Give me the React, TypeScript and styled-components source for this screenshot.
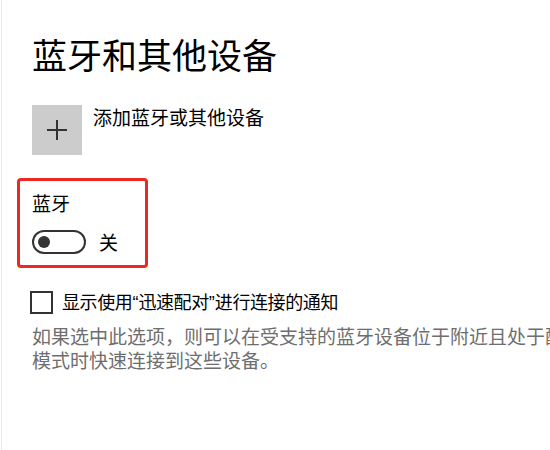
import React from "react";
import styled, { createGlobalStyle } from "styled-components";

const GlobalStyle = createGlobalStyle`
  html, body {
    margin: 0;
    padding: 0;
    background: #ffffff;
    overflow: hidden;
  }
  body {
    font-family: "Noto Sans CJK SC", "Noto Sans", sans-serif;
    color: #000000;
  }
`;

const Page = styled.div`
  box-sizing: border-box;
  width: 550px;
  height: 450px;
  margin-left: 1px;
  border-left: 1px solid #e8e8e8;
  padding: 29px 0 0 30px;
  overflow: hidden;
`;

const Title = styled.h1`
  margin: 0;
  font-size: 35px;
  font-weight: 400;
  line-height: 50px;
  color: #000000;
`;

const AddRow = styled.div`
  display: flex;
  align-items: flex-start;
  gap: 11px;
  margin-top: 26px;
`;

const PlusTile = styled.div`
  width: 50px;
  height: 50px;
  background: #cccccc;
  display: flex;
  align-items: center;
  justify-content: center;
`;

const AddLabel = styled.span`
  font-size: 19px;
  line-height: 24px;
`;

const Highlight = styled.div`
  box-sizing: border-box;
  width: 131px;
  margin: 23px 0 0 -15px;
  padding: 9px 0 11px 12px;
  border: 3px solid #ea2a22;
  border-radius: 4px;
`;

const SectionLabel = styled.div`
  font-size: 19px;
  line-height: 26px;
`;

const ToggleRow = styled.div`
  display: flex;
  align-items: center;
  gap: 13px;
  margin-top: 14px;
`;

const ToggleTrack = styled.div<{ on?: boolean }>`
  box-sizing: border-box;
  width: 54px;
  height: 24px;
  border: 2px solid #333333;
  border-radius: 12px;
  display: flex;
  align-items: center;
  justify-content: ${(p) => (p.on ? "flex-end" : "flex-start")};
  padding: 0 4px;
`;

const Knob = styled.span`
  width: 12px;
  height: 12px;
  border-radius: 50%;
  background: #333333;
`;

const StateText = styled.span`
  font-size: 19px;
  line-height: 24px;
`;

const CheckRow = styled.label`
  display: flex;
  align-items: center;
  gap: 9px;
  margin: 21px 0 0 -2px;
`;

const Box = styled.span`
  box-sizing: border-box;
  width: 23px;
  height: 23px;
  border: 2px solid #333333;
  background: #ffffff;
`;

const CheckText = styled.span`
  font-size: 18px;
  line-height: 24px;
  letter-spacing: -0.4px;
`;

const Quote = styled.span`
  font-family: "Liberation Sans", sans-serif;
  letter-spacing: 0;
`;

const Description = styled.p`
  margin: 9px 0 0;
  font-size: 19px;
  line-height: 24px;
  color: #6e6e6e;
  white-space: nowrap;
`;

const PlusIcon = () => (
  <svg width="22" height="22" viewBox="0 0 22 22">
    <path d="M11 1v20M1 11h20" stroke="#333333" strokeWidth="2" fill="none" />
  </svg>
);

export default function App() {
  return (
    <>
      <GlobalStyle />
      <Page>
        <Title>蓝牙和其他设备</Title>
        <AddRow>
          <PlusTile>
            <PlusIcon />
          </PlusTile>
          <AddLabel>添加蓝牙或其他设备</AddLabel>
        </AddRow>
        <Highlight>
          <SectionLabel>蓝牙</SectionLabel>
          <ToggleRow>
            <ToggleTrack>
              <Knob />
            </ToggleTrack>
            <StateText>关</StateText>
          </ToggleRow>
        </Highlight>
        <CheckRow>
          <Box />
          <CheckText>
            显示使用<Quote>“</Quote>迅速配对<Quote>”</Quote>进行连接的通知
          </CheckText>
        </CheckRow>
        <Description>
          如果选中此选项，则可以在受支持的蓝牙设备位于附近且处于配对
          <br />
          模式时快速连接到这些设备。
        </Description>
      </Page>
    </>
  );
}
